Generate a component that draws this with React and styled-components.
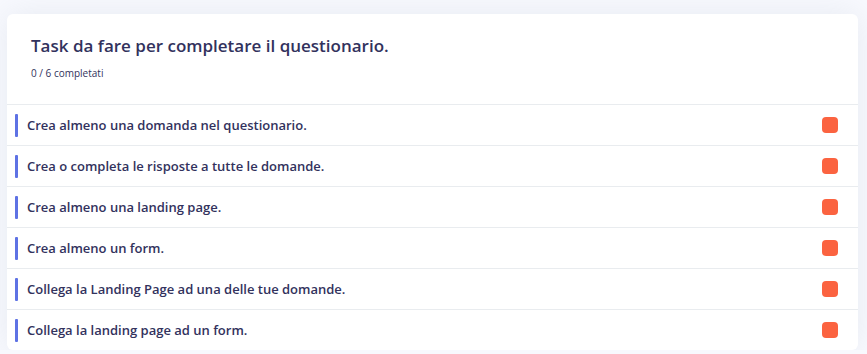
import React from "react";
import styled, { createGlobalStyle } from "styled-components";

const Global = createGlobalStyle`
  html, body { margin: 0; padding: 0; background: #f8f9fe; }
  body { font-family: "Open Sans", "Noto Sans", sans-serif; }
`;

const Page = styled.div`
  padding: 14px 9px 0 7px;
`;

const Card = styled.section`
  background: #fff;
  border-radius: 6px;
  box-shadow: 0 0 32px 0 rgba(136, 152, 170, 0.15);
  overflow: hidden;
`;

const Header = styled.header`
  padding: 20px 24px 24px 24px;
`;

const Title = styled.h3`
  margin: 0;
  font-size: 17px;
  line-height: 24px;
  font-weight: 600;
  color: #32325d;
`;

const Sub = styled.div`
  margin-top: 8px;
  font-size: 10px;
  line-height: 14px;
  font-weight: 500;
  color: #32325d;
`;

const List = styled.ul`
  list-style: none;
  margin: 0;
  padding: 0;
`;

const Row = styled.li`
  display: flex;
  align-items: center;
  height: 40px;
  border-top: 1px solid #e9ecef;
  padding: 0 20px 0 8px;
`;

const Bar = styled.span`
  width: 3px;
  height: 23px;
  border-radius: 1px;
  background: #5e72e4;
  margin-right: 9px;
  flex: none;
`;

const Label = styled.span`
  flex: 1;
  font-size: 13px;
  font-weight: 600;
  color: #32325d;
  line-height: 18px;
`;

const Status = styled.span`
  width: 16px;
  height: 16px;
  border-radius: 4px;
  background: ${(p) => (p.done ? "#2dce89" : "#fb6340")};
  flex: none;
`;

const tasks = [
  "Crea almeno una domanda nel questionario.",
  "Crea o completa le risposte a tutte le domande.",
  "Crea almeno una landing page.",
  "Crea almeno un form.",
  "Collega la Landing Page ad una delle tue domande.",
  "Collega la landing page ad un form.",
];

export default function App() {
  return (
    <>
      <Global />
      <Page>
        <Card>
          <Header>
            <Title>Task da fare per completare il questionario.</Title>
            <Sub>0 / 6 completati</Sub>
          </Header>
          <List>
            {tasks.map((t) => (
              <Row key={t}>
                <Bar />
                <Label>{t}</Label>
                <Status />
              </Row>
            ))}
          </List>
        </Card>
      </Page>
    </>
  );
}
